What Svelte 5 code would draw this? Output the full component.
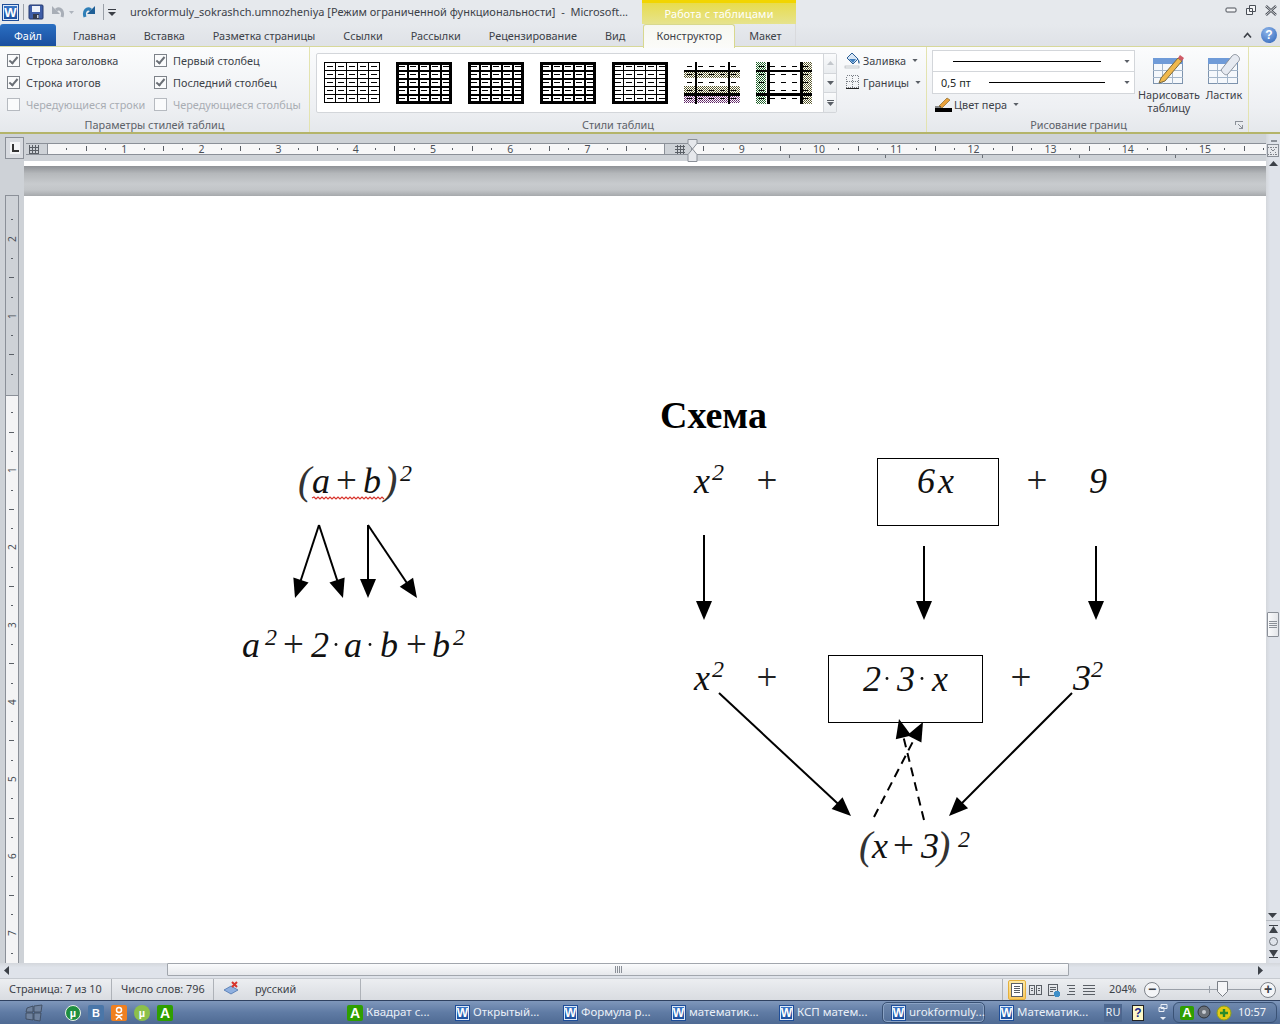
<script lang="ts">
  const tabs = ['Главная', 'Вставка', 'Разметка страницы', 'Ссылки', 'Рассылки', 'Рецензирование', 'Вид']

  const hTicks = []
  for (let i = 1; i < 64; i++) {
    const x = 47 + i * 19.3
    if (x > 660 && x < 695) continue
    hTicks.push({ x: x - 26, kind: i % 4 === 0 ? 'num' : i % 2 === 0 ? 'line' : 'dot', n: i / 4 })
  }

  const vTicks = []
  for (let i = -9; i < 30; i++) {
    const y = 392 + i * 19.3
    if (i === 0) continue
    vTicks.push({ y: y - 195, kind: i % 4 === 0 ? 'num' : i % 2 === 0 ? 'line' : 'dot', n: Math.abs(i / 4) })
  }

  const footTicks = [789, 885, 982, 1079, 1175]

  const big = [
    // first formula
    ['a', 312, 493], ['+', 336, 493], ['b', 363, 493],
    ['a', 242, 657], ['+', 283, 657], ['2', 311, 657], ['a', 344, 657], ['b', 380, 657], ['+', 406, 657], ['b', 432, 657],
    // scheme, top row
    ['x', 694, 493], ['+', 756.5, 493], ['6', 917, 493], ['x', 938, 493], ['+', 1026.5, 493], ['9', 1089, 493],
    // scheme, second row
    ['x', 694, 690], ['+', 756.5, 690], ['2', 863, 691], ['3', 897, 691], ['x', 932, 691], ['+', 1010.5, 690], ['3', 1073, 690],
    // result
    ['x', 872, 858], ['+', 893, 858], ['3', 921, 858]
  ]
  const parens = [['(', 298, 494], [')', 384, 494], ['(', 859, 859], [')', 937, 859]]
  const sups = [
    [400, 481], [265, 645], [453, 645], [712, 480], [712, 677], [1091, 677], [958, 847]
  ]
  const dots = [[336, 657], [370, 657], [887, 691], [922, 691]]

  const arrows = [
    [319, 525, 295, 598], [319, 525, 343, 598], [368, 525, 368, 598], [368, 525, 417, 598],
    [704, 535, 704, 620], [924, 546, 924, 620], [1096, 546, 1096, 620],
    [719, 693, 851, 816], [1072, 693, 949, 816]
  ]
  const dashed = [[874, 817, 923, 722], [924, 820, 899, 719]]

  function head(a: number[]) {
    const [x1, y1, x2, y2] = a
    const d = Math.hypot(x2 - x1, y2 - y1)
    const ux = (x2 - x1) / d
    const uy = (y2 - y1) / d
    const bx = x2 - ux * 19
    const by = y2 - uy * 19
    return `${x2},${y2} ${bx - uy * 8},${by + ux * 8} ${bx + uy * 8},${by - ux * 8}`
  }
  function shaft(a: number[]) {
    const [x1, y1, x2, y2] = a
    const d = Math.hypot(x2 - x1, y2 - y1)
    return { x: x2 - ((x2 - x1) / d) * 16, y: y2 - ((y2 - y1) / d) * 16 }
  }

  let wavy = 'M312 498'
  for (let x = 314, up = true; x <= 385; x += 2, up = !up) wavy += ` L${x} ${up ? 497 : 499}`

  const tasks = [
    { label: 'Квадрат с...', icon: 'a' },
    { label: 'Открытый...', icon: 'w' },
    { label: 'Формула р...', icon: 'w' },
    { label: 'математик...', icon: 'w' },
    { label: 'КСП матем...', icon: 'w' },
    { label: 'urokformuly...', icon: 'w', active: true },
    { label: 'Математик...', icon: 'w' }
  ]

  const dashRows = [4, 12, 20, 28, 36]
  const dashCols = [3, 14, 25, 36, 47]
</script>

{#snippet wordIcon()}
  <span class="w-icon">W</span>
{/snippet}

{#snippet caret()}
  <svg class="caret" width="6" height="3" viewBox="0 0 7 4"><path d="M0 0h7L3.5 4z" /></svg>
{/snippet}

{#snippet dashes()}
  {#each dashRows as y}
    {#each dashCols as x}
      <rect x={x} y={y} width="6" height="1" fill="#000" />
    {/each}
  {/each}
{/snippet}

{#snippet thickTable(inner: number)}
  <svg class="tbl" width="56" height="42" viewBox="0 0 56 42" shape-rendering="crispEdges">
    <rect width="56" height="42" fill="#fff" />
    {@render dashes()}
    <path d="M1.5 1.5H54.5V40.5H1.5Z" fill="none" stroke="#000" stroke-width="3" />
    {#each [11, 22, 33, 44] as x}
      <rect x={x} y="0" width={inner} height="42" fill="#000" />
    {/each}
    {#each [8, 16, 24, 32] as y}
      <rect x="0" y={y} width="56" height={inner} fill="#000" />
    {/each}
  </svg>
{/snippet}

<div class="word">
  <header class="titlebar">
    <div class="qat">
      {@render wordIcon()}
      <span class="qat-sep"></span>
      <svg width="16" height="16" viewBox="0 0 16 16">
        <rect x="1" y="1" width="14" height="14" rx="1" fill="#3f5ea8" stroke="#25386e" />
        <rect x="4" y="2" width="8" height="6" fill="#eef2fa" />
        <rect x="5" y="10" width="6" height="5" fill="#333a4d" />
        <rect x="9" y="11" width="1.5" height="3" fill="#c7cfe0" />
      </svg>
      <svg class="undo" width="14" height="16" viewBox="0 0 14 16">
        <path d="M11 13C13 7 9 3 5 6" fill="none" stroke="#a8aeb7" stroke-width="3" />
        <path d="M1 2v8h8z" fill="#a8aeb7" />
      </svg>
      <svg class="caret small" width="5" height="3" viewBox="0 0 7 4"><path d="M0 0h7L3.5 4z" fill="#aeb4bd" /></svg>
      <svg class="redo" width="14" height="16" viewBox="0 0 14 16">
        <path d="M3 13C1 7 5 3 9 6" fill="none" stroke="#2f7fb8" stroke-width="3" />
        <path d="M13 2v8H5z" fill="#1f5f96" />
      </svg>
      <span class="qat-sep wide"></span>
      <svg width="8" height="8" viewBox="0 0 8 8"><path d="M0 1h8v1H0zM0 4h8L4 8z" fill="#3b3f46" /></svg>
    </div>
    <div class="doc-title">urokformuly_sokrashch.umnozheniya [Режим ограниченной функциональности]  -  Microsoft...</div>
    <div class="context">Работа с таблицами</div>
    <div class="winbtns">
      <svg width="12" height="8" viewBox="0 0 12 8"><rect x="1" y="2" width="10" height="4" rx="1" fill="#f4f5f7" stroke="#4a4f57" /></svg>
      <svg width="12" height="12" viewBox="0 0 12 12"><path d="M4.500 1.500h6v6h-6zM1.500 4.500h6v6h-6z" fill="#f4f5f7" stroke="#4a4f57" /></svg>
      <svg width="12" height="11" viewBox="0 0 12 11"><path d="M1 1l10 9M11 1L1 10" stroke="#4a4f57" stroke-width="2.4" /><path d="M1 1l10 9M11 1L1 10" stroke="#f4f5f7" stroke-width=".8" /></svg>
    </div>
  </header>

  <nav class="tabs">
    <div class="tab-file">Файл</div>
    {#each tabs as t}
      <div class="tab">{t}</div>
    {/each}
    <div class="tab tab-active">Конструктор</div>
    <div class="tab tab-layout">Макет</div>
    <div class="tabs-right">
      <svg width="9" height="7" viewBox="0 0 9 7"><path d="M1 5.500l3.500-4 3.500 4" fill="none" stroke="#3b3f46" stroke-width="1.6" /></svg>
      <span class="help">?</span>
    </div>
  </nav>

  <section class="ribbon">
    <div class="group group-opts">
      <div class="group-body opts">
        <label class="opt"><span class="cb on"></span>Строка заголовка</label>
        <label class="opt"><span class="cb on"></span>Первый столбец</label>
        <label class="opt"><span class="cb on"></span>Строка итогов</label>
        <label class="opt"><span class="cb on"></span>Последний столбец</label>
        <label class="opt off"><span class="cb"></span>Чередующиеся строки</label>
        <label class="opt off"><span class="cb"></span>Чередующиеся столбцы</label>
      </div>
      <div class="group-label">Параметры стилей таблиц</div>
    </div>

    <div class="group group-styles">
      <div class="group-body styles">
        <div class="gallery">
          <div class="gallery-items">
            <svg class="tbl" width="56" height="42" viewBox="0 0 56 42" shape-rendering="crispEdges">
              <rect width="56" height="42" fill="#fff" />
              {@render dashes()}
              <path d="M.5.5H55.500V40.500H.5ZM11.500 0V41M22.500 0V41M33.500 0V41M44.500 0V41M0 8.500H56M0 16.500H56M0 24.500H56M0 32.500H56" fill="none" stroke="#000" />
            </svg>
            {@render thickTable(2)}
            {@render thickTable(2)}
            {@render thickTable(2)}
            {@render thickTable(1)}
            <svg class="tbl" width="56" height="42" viewBox="0 0 56 42" shape-rendering="crispEdges">
              <defs>
                <pattern id="dotOlive" width="2" height="2" patternUnits="userSpaceOnUse"><rect width="1" height="1" fill="#4e4d20" /><rect x="1" y="1" width="1" height="1" fill="#6a6940" /></pattern>
                <pattern id="dotPurple" width="2" height="2" patternUnits="userSpaceOnUse"><rect width="1" height="1" fill="#5a2060" /><rect x="1" y="1" width="1" height="1" fill="#7f4a86" /></pattern>
                <pattern id="dotGreen" width="2" height="2" patternUnits="userSpaceOnUse"><rect width="1" height="1" fill="#1a5a24" /><rect x="1" y="1" width="1" height="1" fill="#2f7038" /></pattern>
              </defs>
              <rect width="56" height="42" fill="#fff" />
              <rect y="10" width="56" height="6" fill="url(#dotOlive)" />
              <rect y="24" width="56" height="7" fill="url(#dotOlive)" />
              <rect y="34" width="56" height="7" fill="url(#dotPurple)" />
              {#each dashRows as y}
                {#each dashCols as x}
                  <rect x={x} y={y} width="5" height="1" fill="#000" />
                {/each}
              {/each}
              <rect y="8" width="56" height="2" fill="#000" />
              <rect y="31" width="56" height="3" fill="#000" />
              <rect x="11" width="2" height="42" fill="#000" />
              <rect x="44" width="2" height="42" fill="#000" />
            </svg>
            <svg class="tbl" width="56" height="42" viewBox="0 0 56 42" shape-rendering="crispEdges">
              <rect width="56" height="42" fill="#fff" />
              <rect width="10" height="42" fill="url(#dotGreen)" />
              <rect x="47" width="9" height="42" fill="url(#dotOlive)" />
              {#each dashRows as y}
                {#each dashCols as x}
                  <rect x={x} y={y} width="5" height="1" fill="#000" />
                {/each}
              {/each}
              <rect y="8" width="56" height="2" fill="#000" />
              <rect y="31" width="56" height="3" fill="#000" />
              <rect x="11" width="3" height="42" fill="#000" />
              <rect x="44" width="3" height="42" fill="#000" />
            </svg>
          </div>
          <div class="gallery-arrows">
            <div class="ga"><svg width="7" height="4" viewBox="0 0 7 4"><path d="M3.500 0L7 4H0z" fill="#c3c7cc" /></svg></div>
            <div class="ga"><svg width="7" height="4" viewBox="0 0 7 4"><path d="M0 0h7L3.500 4z" fill="#5a5f66" /></svg></div>
            <div class="ga"><svg width="7" height="6" viewBox="0 0 7 6"><path d="M0 0h7v1H0zM0 2h7L3.500 6z" fill="#5a5f66" /></svg></div>
          </div>
        </div>
        <div class="fill-btns">
          <div class="small-btn">
            <svg width="17" height="18" viewBox="0 0 17 18">
              <path d="M3 7l5-5 6 6-5 5z" fill="#d8e6f5" stroke="#2b5f96" />
              <path d="M5 8l7 0-3 4z" fill="#3f7fbf" />
              <path d="M14 8c2 2 2 4 1 5-1-1-1-3-1-5z" fill="#2b5f96" />
              <rect x="1" y="15" width="14" height="2" fill="#f4f5f7" stroke="#a8adb3" stroke-width=".6" />
            </svg>
            <span>Заливка</span>{@render caret()}
          </div>
          <div class="small-btn">
            <svg width="17" height="16" viewBox="0 0 17 16" shape-rendering="crispEdges">
              <path d="M2.500 1.500h12v12h-12zM8.500 1.500v12M2.500 7.500h12" fill="none" stroke="#7a7f86" stroke-dasharray="1 1" />
              <path d="M2 14h13" stroke="#222" />
            </svg>
            <span>Границы</span>{@render caret()}
          </div>
        </div>
      </div>
      <div class="group-label">Стили таблиц</div>
    </div>

    <div class="group group-draw">
      <div class="group-body draw">
        <div class="pen-col">
          <div class="combo"><span class="combo-line"></span>{@render caret()}</div>
          <div class="combo weight"><span class="combo-text">0,5 пт</span><span class="combo-line"></span>{@render caret()}</div>
          <div class="small-btn pen">
            <svg width="17" height="15" viewBox="0 0 17 15">
              <path d="M4 9l8-8 3 2-8 8z" fill="#e9a13b" stroke="#8a6a2a" stroke-width=".7" />
              <path d="M0 10h6" stroke="#222" />
              <rect y="11" width="17" height="4" fill="#000" />
            </svg>
            <span>Цвет пера</span>{@render caret()}
          </div>
        </div>
        <div class="big-btn draw-btn">
          <svg width="34" height="32" viewBox="0 0 34 32" shape-rendering="crispEdges">
            <rect x="1.500" y="5.500" width="29" height="25" fill="#f5f8fc" stroke="#7d93ad" />
            <rect x="1" y="5" width="30" height="6" fill="#6f9bd8" />
            <path d="M1 17.500h30M1 24.500h30M10.500 11v20M20.500 11v20" stroke="#a4b6ca" />
            <path d="M9 25l17-20 4 3-17 20-6 2z" fill="#f0b84c" stroke="#7f6a3a" shape-rendering="auto" />
            <path d="M26 5l2-3 4 3-2 3z" fill="#cf5a66" shape-rendering="auto" />
          </svg>
          <span>Нарисовать<br />таблицу</span>
        </div>
        <div class="big-btn erase-btn">
          <svg width="34" height="32" viewBox="0 0 34 32" shape-rendering="crispEdges">
            <rect x="1.500" y="5.500" width="29" height="25" fill="#f5f8fc" stroke="#7d93ad" />
            <rect x="1" y="5" width="30" height="6" fill="#6f9bd8" />
            <path d="M1 17.500h30M1 24.500h30M10.500 11v20M20.500 11v20" stroke="#a4b6ca" />
            <path d="M14 17L25 3c2-2 4-2 6 0s2 4 0 6L21 21c-2 2-5 0-7-4z" fill="#e6eaf1" stroke="#8b929c" shape-rendering="auto" />
          </svg>
          <span>Ластик</span>
        </div>
      </div>
      <div class="group-label draw-label">Рисование границ
        <svg class="launcher" width="8" height="8" viewBox="0 0 8 8" shape-rendering="crispEdges"><path d="M.5 4V.5H7.500M3 3l4 4M4 7.500h3.500V4" fill="none" stroke="#8b9098" /></svg>
      </div>
    </div>
  </section>

  <div class="workspace">
    <aside class="left-col">
      <div class="tab-stop"><span class="tab-l"></span></div>
      <div class="vruler">
        <div class="vruler-margin"></div>
        {#each vTicks as t}
          {#if t.kind === 'num'}
            <span class="v-num" style="top: {t.y}px">{t.n}</span>
          {:else}
            <span class="v-tick {t.kind}" style="top: {t.y}px"></span>
          {/if}
        {/each}
      </div>
    </aside>

    <main class="center">
      <div class="hruler-row">
        <div class="hruler">
          <div class="h-margin m1"></div>
          <div class="h-margin m2">
            <svg width="10" height="9" viewBox="0 0 10 9" shape-rendering="crispEdges"><path d="M2.500 0v9M5.500 0v9M8.500 0v9M0 1.500h10M0 4.500h10M0 7.500h10" stroke="#5a5f66" /></svg>
          </div>
          {#each hTicks as t}
            {#if t.kind === 'num'}
              <span class="h-num" style="left: {t.x}px">{t.n}</span>
            {:else}
              <span class="h-tick {t.kind}" style="left: {t.x}px"></span>
            {/if}
          {/each}
          <svg class="marker" width="11" height="23" viewBox="0 0 11 23">
            <path d="M1 .5h9v4L5.500 10 1 4.500zM5.500 10L10 15.500v7H1v-7z" fill="#e6e8ec" stroke="#8b9098" />
          </svg>
        </div>
        {#each footTicks as x}
          <span class="foot-tick" style="left: {x - 24}px"></span>
        {/each}
      </div>
      <div class="white-strip"></div>
      <div class="page-gap"></div>
      <div class="page">
        <svg class="canvas" viewBox="24 196 1242 767" width="1242" height="767">
          <text class="heading" x="660" y="428">Схема</text>

          {#each big as [g, x, y]}
            <text class={g === '+' ? 'plus' : 'mi'} x={x} y={y}>{g}</text>
          {/each}
          {#each parens as [g, x, y]}
            <text class="paren" x={x} y={y}>{g}</text>
          {/each}
          {#each sups as [x, y]}
            <text class="sup" x={x} y={y}>2</text>
          {/each}
          {#each dots as [x, y]}
            <circle cx={x} cy={y - 12.5} r="1.4" fill="#111" />
          {/each}

          <path d={wavy} fill="none" stroke="#d8342c" stroke-width="1.2" />

          <rect x="877.500" y="458.500" width="121" height="67" fill="none" stroke="#000" />
          <rect x="828.500" y="655.500" width="154" height="67" fill="none" stroke="#000" />

          {#each arrows as a}
            {@const s = shaft(a)}
            <line x1={a[0]} y1={a[1]} x2={s.x} y2={s.y} stroke="#000" stroke-width="2" />
            <polygon points={head(a)} fill="#000" />
          {/each}
          {#each dashed as a}
            {@const s = shaft(a)}
            <line x1={a[0]} y1={a[1]} x2={s.x} y2={s.y} stroke="#000" stroke-width="2" stroke-dasharray="9 6" />
            <polygon points={head(a)} fill="#000" />
          {/each}
        </svg>
      </div>
    </main>

    <aside class="vscroll">
      <div class="split-handle"></div>
      <div class="ruler-toggle">
        <svg width="12" height="12" viewBox="0 0 12 12" shape-rendering="crispEdges"><path d="M0 1.500h12M0 10.500h12M2 3l8 6M10 3L2 9" stroke="#6a6f76" stroke-dasharray="1 1" /></svg>
      </div>
      <svg class="sb-arrow up" width="9" height="5" viewBox="0 0 9 5"><path d="M4.500 0L9 5H0z" /></svg>
      <div class="vthumb"><span></span><span></span><span></span><span></span></div>
      <svg class="sb-arrow down" width="9" height="5" viewBox="0 0 9 5"><path d="M0 0h9L4.500 5z" /></svg>
      <div class="browse">
        <svg width="9" height="9" viewBox="0 0 9 9"><path d="M0 1h9v1H0zM4.500 2L9 9H0z" /></svg>
        <span class="browse-dot"></span>
        <svg width="9" height="9" viewBox="0 0 9 9"><path d="M0 0h9L4.500 7zM0 7h9v1H0z" /></svg>
      </div>
    </aside>
  </div>

  <div class="hscroll">
    <svg class="sb-arrow" width="5" height="9" viewBox="0 0 5 9"><path d="M5 0v9L0 4.500z" /></svg>
    <div class="hthumb"><span></span><span></span><span></span><span></span></div>
    <svg class="sb-arrow right" width="5" height="9" viewBox="0 0 5 9"><path d="M0 0v9l5-4.500z" /></svg>
  </div>

  <footer class="status">
    <div class="st-cell cell-page">Страница: 7 из 10</div>
    <div class="st-cell cell-words">Число слов: 796</div>
    <div class="st-cell lang">
      <svg width="17" height="15" viewBox="0 0 17 15">
        <path d="M1 9l7-4 7 4-7 4z" fill="#8fb0e0" stroke="#3f6aa8" stroke-width=".7" />
        <path d="M9 1l5 5M14 1L9 6" stroke="#d8342c" stroke-width="2" />
      </svg>
      <span>русский</span>
    </div>
    <div class="views">
      <span class="view active">
        <svg width="14" height="14" viewBox="0 0 14 14" shape-rendering="crispEdges"><path d="M1.500.5h11v13h-11zM4 3.500h6M4 5.500h6M4 7.500h6M4 9.500h6" fill="#fff" stroke="#5a5f66" /></svg>
      </span>
      {#each ['M1 2.500h5v9H1zM8 2.500h5v9H8zM2.500 5h2M2.500 7h2M9.500 5h2M9.500 7h2', 'M2.500 1.500h9v11h-9zM4 4h6M4 6h6M4 8h3', 'M3 2h8M5 5h6M5 8h6M3 11h8', 'M1 2.500h12M1 5.500h12M1 8.500h12M1 11.500h12'] as d, i}
        <span class="view">
          <svg width="14" height="14" viewBox="0 0 14 14" shape-rendering="crispEdges"><path d={d} fill="none" stroke="#5a5f66" />
            {#if i === 1}<circle cx="11" cy="11" r="3" fill="#3f8fc8" />{/if}
          </svg>
        </span>
      {/each}
    </div>
    <div class="zoom-pct">204%</div>
    <span class="zoom-btn">−</span>
    <div class="zoom-slider">
      <span class="zoom-mid"></span>
      <svg class="zoom-thumb" width="11" height="16" viewBox="0 0 11 16"><path d="M.5.500h10v10L5.500 15.500.5 10.500z" fill="#f4f5f7" stroke="#7a7f86" /></svg>
    </div>
    <span class="zoom-btn">+</span>
  </footer>

  <div class="taskbar">
    <svg class="orb" width="18" height="18" viewBox="0 0 18 18">
      <path d="M2 4l6-2v6H1zM9 2l8-1-1 7H9zM1 9h7v7l-7-1zM9 9h7l-1 8-6-1z" fill="#6f829e" stroke="#3a4658" stroke-width=".8" />
    </svg>
    <div class="quick">
      <span class="q green-round">µ</span>
      <span class="q blue">В</span>
      <span class="q orange">
        <svg width="16" height="16" viewBox="0 0 16 16">
          <circle cx="8" cy="5" r="2.500" fill="none" stroke="#fff" stroke-width="1.500" />
          <path d="M4.500 9.500c2 1.300 5 1.300 7 0M8 10.500v1.500M5 14.500l3-3 3 3" fill="none" stroke="#fff" stroke-width="1.500" />
        </svg>
      </span>
      <span class="q lime">µ</span>
      <span class="q agreen">A</span>
    </div>
    <div class="tasks">
      {#each tasks as t}
        <div class="task" class:active={t.active}>
          {#if t.icon === 'w'}
            {@render wordIcon()}
          {:else}
            <span class="q agreen task-a">A</span>
          {/if}
          <span class="task-label">{t.label}</span>
        </div>
      {/each}
    </div>
    <span class="lang-ru">RU</span>
    <span class="lang-help">?</span>
    <svg class="restore" width="10" height="20" viewBox="0 0 10 20"><path d="M3 1.500h6v4H3zM1 4.500h5v4H1z" fill="none" stroke="#e8edf5" /><path d="M2 14h6l-3 3z" fill="#e8edf5" /></svg>
    <div class="tray">
      <span class="q agreen tray-a">A</span>
      <svg width="16" height="18" viewBox="0 0 16 18"><circle cx="7" cy="8" r="6" fill="#6a7078" stroke="#30353c" /><circle cx="7" cy="8" r="2" fill="#c8ccd2" /></svg>
      <svg width="16" height="16" viewBox="0 0 16 16"><circle cx="8" cy="8" r="7" fill="#e4c915" stroke="#8aa01c" /><path d="M4 8h8M8 4v8" stroke="#2a8a2a" stroke-width="2.4" /></svg>
      <span class="clock">10:57</span>
    </div>
  </div>
</div>

<style>
  :global(body) {
    margin: 0;
    overflow: hidden;
  }

  .word {
    width: 1280px;
    height: 1024px;
    display: flex;
    flex-direction: column;
    overflow: hidden;
    font-family: 'Noto Sans', 'Open Sans', sans-serif;
    font-size: 10.85px;
    color: #3c4148;
    background: #e4e7eb;
  }

  .titlebar {
    height: 24px;
    display: flex;
    background: #e6e9ed;
  }

  .qat {
    width: 130px;
    padding-left: 2px;
    box-sizing: border-box;
    display: flex;
    align-items: center;
    gap: 4px;
  }

  .qat-sep {
    width: 1px;
    height: 16px;
    background: #9aa0a8;
  }

  .qat-sep.wide {
    margin-left: 3px;
  }

  .undo {
    margin-left: 3px;
  }

  .redo {
    margin-left: 4px;
  }

  .w-icon {
    width: 15px;
    height: 15px;
    flex: none;
    border: 1px solid #1e4d98;
    background: linear-gradient(#3a78c9, #1a4c9c);
    color: #fff;
    font: bold 13px/15px 'Liberation Sans', sans-serif;
    text-align: center;
    box-sizing: content-box;
    box-shadow: inset 0 0 0 1px #dfe9f7;
  }

  .doc-title {
    width: 512px;
    font-size: 11px;
    line-height: 24px;
    white-space: pre;
    overflow: hidden;
    color: #3c4148;
  }

  .context {
    width: 154px;
    box-sizing: border-box;
    border-top: 3px solid #f2d500;
    background: linear-gradient(#e8dc4c, #e6e38e);
    color: #fff;
    text-align: center;
    line-height: 21px;
    letter-spacing: 0.2px;
  }

  .winbtns {
    margin-left: auto;
    padding: 0 3px 4px 0;
    display: flex;
    gap: 8px;
    align-items: center;
  }

  .tabs {
    height: 23px;
    display: flex;
    align-items: stretch;
    background: linear-gradient(#e6e9ed, #dfe2e7);
    border-bottom: 1px solid #d7d89a;
    box-sizing: border-box;
    position: relative;
  }

  .tab-file {
    width: 56px;
    margin-right: 3px;
    border-radius: 3px 3px 0 0;
    background: linear-gradient(#2a6fc2, #1a4f9f);
    color: #fff;
    text-align: center;
    line-height: 23px;
  }

  .tab {
    padding: 0 14px;
    line-height: 23px;
  }

  .tab-active {
    height: 24px;
    margin-left: 4px;
    padding: 0 11px;
    width: 92px;
    box-sizing: border-box;
    text-align: center;
    background: linear-gradient(#f6f7f0, #fbfbf9);
    border: 1px solid #d8d88e;
    border-bottom: 0;
    border-radius: 3px 3px 0 0;
    line-height: 22px;
  }

  .tab-layout {
    width: 61px;
    padding: 0;
    box-sizing: border-box;
    text-align: center;
    border-right: 1px solid #d9dadd;
  }

  .tabs-right {
    margin-left: auto;
    padding-right: 3px;
    display: flex;
    align-items: center;
    gap: 9px;
  }

  .help {
    width: 16px;
    height: 16px;
    border-radius: 50%;
    background: radial-gradient(circle at 40% 30%, #8fb6ea, #2c62b8);
    color: #fff;
    font: bold 12px/16px 'Liberation Sans', sans-serif;
    text-align: center;
  }

  .ribbon {
    height: 87px;
    display: flex;
    box-sizing: border-box;
    border-bottom: 2px solid #b4b46a;
    background: linear-gradient(#fbfcfd, #eef0f3 70%, #e5e8ec);
  }

  .group {
    display: flex;
    flex-direction: column;
    box-sizing: border-box;
    border-right: 1px solid #e3e3b0;
  }

  .group-opts {
    width: 310px;
  }

  .group-styles {
    width: 617px;
  }

  .group-draw {
    width: 322px;
  }

  .group-body {
    height: 71px;
    box-sizing: border-box;
  }

  .group-label {
    height: 14px;
    line-height: 14px;
    text-align: center;
    color: #5c6168;
    position: relative;
  }

  .draw-label {
    padding-right: 18px;
  }

  .opts {
    padding: 2px 0 0 7px;
    display: grid;
    grid-template-columns: 147px 1fr;
    grid-auto-rows: 22px;
  }

  .opt {
    display: flex;
    align-items: center;
    white-space: nowrap;
  }

  .opt.off {
    color: #a9adb3;
  }

  .cb {
    width: 11px;
    height: 11px;
    margin-right: 6px;
    flex: none;
    border: 1px solid #b6bac0;
    background: #fafbfc;
    position: relative;
  }

  .cb.on {
    border-color: #7d8289;
  }

  .cb.on::after {
    content: '';
    position: absolute;
    left: 3px;
    top: 0;
    width: 3px;
    height: 7px;
    border: solid #6a6f76;
    border-width: 0 2px 2px 0;
    transform: rotate(40deg);
  }

  .styles {
    padding: 6px 0 0 6px;
    display: flex;
  }

  .gallery {
    width: 521px;
    height: 60px;
    display: flex;
    box-sizing: border-box;
    border: 1px solid #d3d6da;
    border-radius: 2px;
    background: #fff;
  }

  .gallery-items {
    width: 506px;
    padding: 8px 0 0 7px;
    box-sizing: border-box;
    display: flex;
    gap: 16px;
  }

  .tbl {
    display: block;
    flex: none;
  }

  .gallery-arrows {
    flex: 1;
    display: flex;
    flex-direction: column;
    border-left: 1px solid #d3d6da;
  }

  .ga {
    flex: 1;
    display: flex;
    align-items: center;
    justify-content: center;
    border-bottom: 1px solid #d3d6da;
    background: linear-gradient(#fafbfc, #e9ecef);
  }

  .ga:last-child {
    border-bottom: 0;
  }

  .fill-btns {
    margin: -2px 0 0 7px;
    display: flex;
    flex-direction: column;
    gap: 4px;
  }

  .small-btn {
    height: 18px;
    display: flex;
    align-items: center;
    gap: 2px;
  }

  .caret {
    margin-left: 4px;
    fill: #5a5f66;
  }

  .caret.small {
    margin-left: 0;
  }

  .draw {
    padding: 3px 0 0 5px;
    display: flex;
  }

  .pen-col {
    width: 203px;
    flex: none;
  }

  .combo {
    height: 22px;
    margin-bottom: 0;
    display: flex;
    align-items: center;
    box-sizing: border-box;
    border: 1px solid #d3d6da;
    background: #fff;
    padding: 0 4px 0 20px;
  }

  .combo.weight {
    height: 23px;
    margin-top: -1px;
    padding-left: 8px;
  }

  .combo .caret {
    margin-left: auto;
  }

  .combo-text {
    width: 48px;
    flex: none;
    white-space: nowrap;
    color: #1c1f24;
  }

  .combo-line {
    width: 148px;
    height: 1px;
    flex: none;
    background: #000;
  }

  .weight .combo-line {
    width: 116px;
  }

  .pen {
    margin: 1px 0 0 3px;
  }

  .big-btn {
    display: flex;
    flex-direction: column;
    align-items: center;
    line-height: 13px;
    white-space: nowrap;
    gap: 3px;
    padding-top: 3px;
    text-align: center;
  }

  .draw-btn {
    width: 64px;
    margin-left: 2px;
  }

  .erase-btn {
    width: 46px;
    margin-left: 0;
  }

  .launcher {
    position: absolute;
    right: 5px;
    top: 3px;
  }

  .workspace {
    height: 829px;
    display: flex;
    background: #ced2d7;
  }

  .left-col {
    width: 24px;
    flex: none;
    position: relative;
  }

  .tab-stop {
    position: absolute;
    left: 5px;
    top: 3px;
    width: 19px;
    height: 22px;
    box-sizing: border-box;
    border: 1px solid #8b9098;
    background: #d8dbe0;
    display: flex;
    align-items: center;
    justify-content: center;
  }

  .tab-stop .tab-l {
    width: 10px;
    height: 12px;
    box-sizing: border-box;
    background: #f4f5f7;
    position: relative;
    border: 1px solid #8b9098;
    border-width: 0;
  }

  .tab-l::after {
    content: '';
    position: absolute;
    left: 2px;
    top: 2px;
    width: 5px;
    height: 6px;
    border: solid #333;
    border-width: 0 0 2px 2px;
  }

  .vruler {
    position: absolute;
    left: 5px;
    top: 61px;
    width: 14px;
    height: 768px;
    box-sizing: border-box;
    border: 1px solid #8b9098;
    border-bottom: 0;
    background: #f4f4f5;
    overflow: hidden;
  }

  .vruler-margin {
    height: 199px;
    background: #ced2d7;
    border-bottom: 1px solid #8b9098;
  }

  .v-num {
    position: absolute;
    left: 0;
    width: 12px;
    margin-top: -7px;
    height: 14px;
    line-height: 14px;
    text-align: center;
    transform: rotate(-90deg);
    font-size: 10px;
    color: #4a4f56;
  }

  .v-tick {
    position: absolute;
    background: #5a5f66;
    height: 1px;
  }

  .v-tick.dot {
    left: 5px;
    width: 2px;
  }

  .v-tick.line {
    left: 3px;
    width: 5px;
  }

  .center {
    flex: 1;
    min-width: 0;
    display: flex;
    flex-direction: column;
  }

  .hruler-row {
    height: 27px;
    flex: none;
    padding-top: 9px;
    box-sizing: border-box;
    position: relative;
  }

  .hruler {
    height: 12px;
    margin-left: 2px;
    box-sizing: border-box;
    border: solid #8b9098;
    border-width: 1px 0;
    background: #f7f7f8;
    position: relative;
  }

  .h-margin {
    position: absolute;
    top: 0;
    bottom: 0;
    background: #ced2d7;
    border-right: 1px solid #8b9098;
    box-sizing: border-box;
    display: flex;
    align-items: center;
    justify-content: flex-start;
    padding-left: 3px;
  }

  .m1 {
    left: 0;
    width: 22px;
  }

  .m2 {
    left: 638px;
    width: 28px;
    border-left: 1px solid #8b9098;
    padding-left: 10px;
  }

  .m1::before {
    content: '';
    width: 10px;
    height: 9px;
    background:
      repeating-linear-gradient(90deg, #5a5f66 0 1px, transparent 1px 3px),
      repeating-linear-gradient(0deg, #5a5f66 0 1px, transparent 1px 3px);
  }

  .h-num {
    position: absolute;
    top: 0;
    width: 20px;
    margin-left: -10px;
    text-align: center;
    font-size: 10.5px;
    line-height: 10px;
    color: #4a4f56;
  }

  .h-tick {
    position: absolute;
    width: 1px;
    background: #5a5f66;
  }

  .h-tick.dot {
    top: 4px;
    height: 2px;
  }

  .h-tick.line {
    top: 2px;
    height: 5px;
  }

  .marker {
    position: absolute;
    left: 661px;
    top: -5px;
  }

  .foot-tick {
    position: absolute;
    top: 21px;
    width: 1px;
    height: 3px;
    background: #6a6f76;
  }

  .white-strip {
    height: 5px;
    background: #fff;
  }

  .page-gap {
    height: 30px;
    background: linear-gradient(#8f9296, #b5b8bb 25%, #c8cbce 60%, #c2c5c8 80%, #a6a9ac);
  }

  .page {
    flex: 1;
    min-height: 0;
    background: #fff;
    overflow: hidden;
  }

  .canvas {
    display: block;
  }

  .heading {
    font: bold 38px 'Liberation Serif', serif;
    fill: #000;
  }

  .mi {
    font: italic 36px 'Liberation Serif', serif;
    fill: #111;
  }

  .paren {
    font: italic 40px 'Liberation Serif', serif;
    fill: #333;
  }

  .plus {
    font: 37px 'Liberation Serif', serif;
    fill: #222;
  }

  .sup {
    font: italic 24px 'Liberation Serif', serif;
    fill: #111;
  }

  .vscroll {
    width: 14px;
    flex: none;
    position: relative;
    background: linear-gradient(90deg, #d4d7dc, #dfe3ea 30%);
  }

  .split-handle {
    position: absolute;
    left: 5px;
    top: 6px;
    width: 6px;
    height: 2px;
    background: #8b9098;
  }

  .ruler-toggle {
    position: absolute;
    left: 1px;
    top: 10px;
    width: 12px;
    height: 13px;
    box-sizing: border-box;
    border: 1px solid #8b9098;
    background: #e6e8ec;
    display: flex;
    align-items: center;
    justify-content: center;
    overflow: hidden;
  }

  .sb-arrow {
    fill: #3c4148;
  }

  .sb-arrow.up {
    position: absolute;
    left: 3px;
    top: 27px;
  }

  .sb-arrow.down {
    position: absolute;
    left: 2px;
    top: 779px;
  }

  .vthumb {
    position: absolute;
    left: 1px;
    top: 478px;
    width: 12px;
    height: 25px;
    box-sizing: border-box;
    border: 1px solid #8b9098;
    border-radius: 1px;
    background: linear-gradient(90deg, #fafbfc, #e4e6ea);
    display: flex;
    flex-direction: column;
    align-items: center;
    justify-content: center;
    gap: 1px;
  }

  .vthumb span {
    width: 8px;
    height: 1px;
    background: #8b9098;
  }

  .browse {
    position: absolute;
    left: 0;
    top: 786px;
    width: 14px;
    height: 43px;
    box-sizing: border-box;
    border-top: 1px solid #b4b9c0;
    display: flex;
    flex-direction: column;
    align-items: center;
    padding-top: 3px;
    gap: 4px;
    fill: #3c4148;
  }

  .browse-dot {
    width: 7px;
    height: 7px;
    border: 1px solid #6a6f76;
    border-radius: 50%;
  }

  .hscroll {
    height: 15px;
    flex: none;
    position: relative;
    display: flex;
    align-items: center;
    box-sizing: border-box;
    background: linear-gradient(#d4d7dc, #dfe3ea 30%);
    padding-left: 4px;
  }

  .hscroll .right {
    margin-left: auto;
    margin-right: 17px;
  }

  .hthumb {
    position: absolute;
    left: 167px;
    top: 0;
    width: 902px;
    height: 13px;
    box-sizing: border-box;
    border: 1px solid #a1a6ad;
    border-radius: 1px;
    background: linear-gradient(#fafbfc, #e6e8ec);
    display: flex;
    align-items: center;
    justify-content: center;
    gap: 1px;
  }

  .hthumb span {
    width: 1px;
    height: 7px;
    background: #8b9098;
  }

  .status {
    height: 22px;
    flex: none;
    display: flex;
    align-items: center;
    box-sizing: border-box;
    border-top: 1px solid #c6cad0;
    background: linear-gradient(#eceef1, #d9dce1);
  }

  .st-cell {
    height: 100%;
    display: flex;
    align-items: center;
    padding: 0 9px 2px;
    white-space: nowrap;
    box-sizing: border-box;
    border-right: 1px solid #aeb2b8;
  }

  .cell-page {
    width: 112px;
  }

  .cell-words {
    width: 102px;
  }

  .lang {
    width: 147px;
    gap: 15px;
  }

  .views {
    margin-left: 641px;
    display: flex;
    align-items: center;
    box-sizing: border-box;
    border-left: 1px solid #aeb2b8;
    height: 100%;
    padding-left: 5px;
    gap: 0;
  }

  .view {
    width: 18px;
    height: 20px;
    display: flex;
    align-items: center;
    justify-content: center;
  }

  .view.active {
    box-sizing: border-box;
    border: 1px solid #e5b03c;
    border-radius: 2px;
    background: linear-gradient(#fdeaa8, #f9c85e);
  }

  .zoom-pct {
    margin-left: 11px;
    width: 35px;
    padding-bottom: 2px;
  }

  .zoom-btn {
    width: 16px;
    height: 16px;
    flex: none;
    box-sizing: border-box;
    border: 1px solid #7d8289;
    border-radius: 50%;
    background: #f4f5f7;
    font: bold 14px/13px 'Liberation Sans', sans-serif;
    text-align: center;
    color: #3c4148;
  }

  .zoom-slider {
    width: 100px;
    height: 1px;
    flex: none;
    background: #9aa0a8;
    position: relative;
  }

  .zoom-mid {
    position: absolute;
    left: 49px;
    top: -3px;
    width: 1px;
    height: 7px;
    background: #9aa0a8;
  }

  .zoom-thumb {
    position: absolute;
    left: 57px;
    top: -8px;
  }

  .taskbar {
    height: 24px;
    flex: none;
    display: flex;
    align-items: center;
    position: relative;
    background: linear-gradient(#7f97bb, #5f7ba4 50%, #4f6a93);
    border-top: 1px solid #2f4160;
    box-sizing: border-box;
    color: #eaf0f8;
    font-size: 11.5px;
  }

  .orb {
    margin-left: 25px;
  }

  .quick {
    margin-left: 22px;
    display: flex;
    gap: 7px;
  }

  .q {
    width: 16px;
    height: 16px;
    flex: none;
    color: #fff;
    font: bold 11px/16px 'Liberation Sans', sans-serif;
    text-align: center;
    border-radius: 2px;
  }

  .q svg {
    display: block;
  }

  .green-round {
    background: #1f8f3f;
    border-radius: 50%;
    border: 1px solid #e8f2e8;
    box-sizing: border-box;
    line-height: 14px;
  }

  .blue {
    background: #4a76a8;
  }

  .orange {
    background: #f08020;
  }

  .lime {
    background: #8cc04a;
    border-radius: 50%;
  }

  .agreen {
    background: #2f9f00;
    font-size: 14px;
  }

  .tasks {
    position: absolute;
    left: 347px;
    top: 0;
    display: flex;
    height: 100%;
  }

  .task {
    width: 108px;
    height: 100%;
    flex: none;
    display: flex;
    align-items: center;
    gap: 3px;
    padding-left: 0;
    white-space: nowrap;
    box-sizing: border-box;
  }

  .task-label {
    margin-top: -2px;
  }

  .task .w-icon {
    width: 13px;
    height: 14px;
    font-size: 12px;
    line-height: 14px;
  }

  .task.active {
    margin-left: -5px;
    margin-right: 14px;
    width: 103px;
    padding-left: 8px;
    height: 21px;
    margin-top: 1px;
    border: 1px solid #3a5275;
    border-radius: 5px;
    background: linear-gradient(#6f89ae, #54709a);
    box-shadow: inset 0 0 0 1px #8aa2c4;
  }

  .lang-ru {
    position: absolute;
    left: 1104px;
    top: 3px;
    width: 18px;
    height: 18px;
    background: #4c668e;
    text-align: center;
    line-height: 16px;
    font-size: 11px;
  }

  .lang-help {
    position: absolute;
    left: 1132px;
    top: 4px;
    width: 12px;
    height: 16px;
    background: #fff9c8;
    border: 1px solid #222;
    box-sizing: border-box;
    color: #1c2a8a;
    font: bold 12px/14px 'Liberation Sans', sans-serif;
    text-align: center;
  }

  .restore {
    position: absolute;
    left: 1158px;
    top: 2px;
  }

  .tray {
    position: absolute;
    left: 1173px;
    top: 1px;
    width: 104px;
    height: 21px;
    box-sizing: border-box;
    border: 1px solid #3a5275;
    border-radius: 6px;
    background: linear-gradient(#6f89ae, #54709a);
    display: flex;
    align-items: center;
    padding-left: 6px;
    gap: 3px;
  }

  .tray-a {
    width: 14px;
    height: 14px;
    line-height: 14px;
    font-size: 13px;
  }

  .clock {
    margin-left: 3px;
    margin-top: -2px;
    color: #f2f5fa;
    font-size: 11px;
  }
</style>
